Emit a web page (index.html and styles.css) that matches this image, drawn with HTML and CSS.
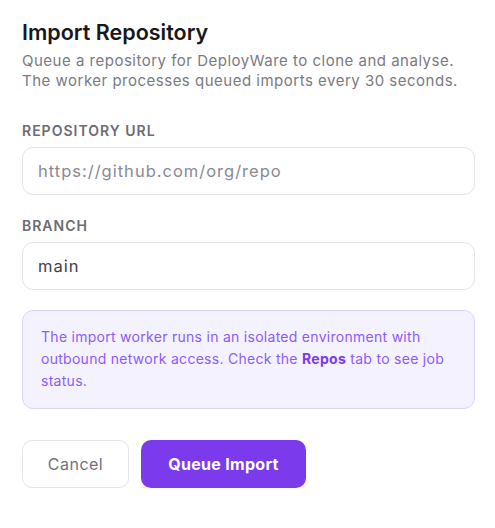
FILE: index.html
```html
<!DOCTYPE html>
<html lang="en">
<head>
<meta charset="utf-8">
<title>Import Repository</title>
<link rel="stylesheet" href="styles.css">
</head>
<body>
<main class="dialog">
  <h1 class="title">Import Repository</h1>
  <p class="subtitle">Queue a repository for DeployWare to clone and analyse. The worker processes queued imports every 30 seconds.</p>

  <label class="field">
    <span class="label">Repository URL</span>
    <input class="input" type="text" placeholder="https://github.com/org/repo">
  </label>

  <label class="field">
    <span class="label">Branch</span>
    <input class="input" type="text" value="main">
  </label>

  <div class="notice">The import worker runs in an isolated environment with outbound network access. Check the <strong>Repos</strong> tab to see job status.</div>

  <div class="actions">
    <button class="btn btn-cancel" type="button">Cancel</button>
    <button class="btn btn-primary" type="button">Queue Import</button>
  </div>
</main>
</body>
</html>
```

FILE: styles.css
```css
html, body {
  margin: 0;
  padding: 0;
  background: #ffffff;
}

body {
  font-family: Inter, "Noto Sans", sans-serif;
  color: #1a1a1f;
}

.dialog {
  padding: 18px 20px 20px 22px;
  display: flex;
  flex-direction: column;
}

.title {
  margin: 0;
  font-size: 21.5px;
  font-weight: 600;
  line-height: 28px;
  letter-spacing: 0;
  color: #18181b;
}

.subtitle {
  margin: 5px 0 0;
  font-size: 15px;
  line-height: 20px;
  color: #7a7a82;
  letter-spacing: 0.5px;
  max-width: 445px;
}

.field {
  display: flex;
  flex-direction: column;
  margin-top: 31px;
}

.field + .field {
  margin-top: 22px;
}

.label {
  font-size: 14px;
  font-weight: 600;
  line-height: 18px;
  text-transform: uppercase;
  color: #6b6b73;
  letter-spacing: 1px;
}

.input {
  margin-top: 7px;
  box-sizing: border-box;
  height: 48px;
  width: 100%;
  padding: 0 15px;
  border: 1px solid #e4e4e7;
  border-radius: 11px;
  font-family: inherit;
  font-size: 16.5px;
  letter-spacing: 1px;
  color: #3f3f46;
  background: #fff;
  outline: none;
}

.input::placeholder {
  color: #8a8a92;
}

.notice {
  margin-top: 20px;
  box-sizing: border-box;
  padding: 15px 18px 16px;
  background: #f5f2ff;
  border: 1px solid #ddd3fc;
  border-radius: 11px;
  font-size: 14px;
  line-height: 22px;
  color: #8b5cf6;
  letter-spacing: 0.28px;
}

.notice strong {
  font-weight: 700;
  color: #7c3aed;
}

.actions {
  display: flex;
  gap: 12px;
  margin-top: 31px;
}

.btn {
  height: 48px;
  border-radius: 10px;
  font-family: inherit;
  font-size: 16px;
  cursor: pointer;
}

.btn-cancel {
  width: 107px;
  background: #fff;
  border: 1px solid #e4e4e7;
  color: #71717a;
  letter-spacing: 0.5px;
}

.btn-primary {
  width: 165px;
  background: #7c3aed;
  border: none;
  color: #fff;
  font-weight: 700;
  letter-spacing: 0.3px;
}
```
